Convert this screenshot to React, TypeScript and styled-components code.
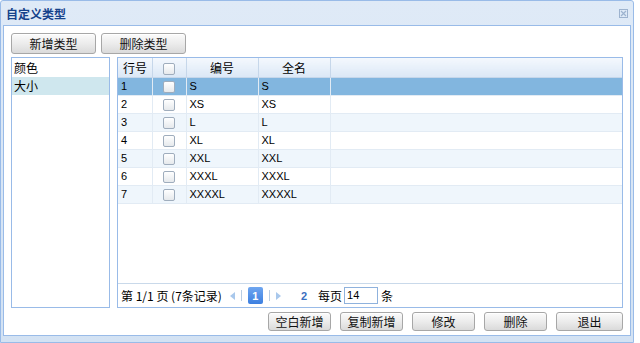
import React from "react";
import styled, { createGlobalStyle, css } from "styled-components";

const Global = createGlobalStyle`
  html, body { margin: 0; padding: 0; background: #ffffff; }
  body { font-family: "Noto Sans CJK SC", "Liberation Sans", sans-serif; font-size: 12px; color: #000; }
  * { box-sizing: border-box; }
`;

const Window = styled.div`
  width: 634px;
  height: 343px;
  display: flex;
  flex-direction: column;
  background: linear-gradient(#dfeaf7, #d3e2f3);
  border: 1px solid #99bbe8;
  border-radius: 3px 3px 0 0;
`;

const TitleBar = styled.div`
  height: 24px;
  display: flex;
  align-items: center;
  justify-content: space-between;
  padding: 0 5px 0 5px;
`;

const Title = styled.span`
  font-size: 12px;
  font-weight: bold;
  color: #15428b;
`;

const Body = styled.div`
  flex: 1;
  margin: 0 2px 6px 2px;
  background: #fff;
  border: 1px solid #99bbe8;
  padding: 7px 7px 0 7px;
  display: flex;
  flex-direction: column;
`;

const Toolbar = styled.div`
  display: flex;
  gap: 5px;
  height: 21px;
`;

const Button = styled.button<{ $w: number }>`
  width: ${(p) => p.$w}px;
  height: 100%;
  padding: 0;
  font-family: "Noto Sans CJK SC", sans-serif;
  font-size: 12px;
  color: #111;
  border: 1px solid #a7a7a7;
  border-radius: 3px;
  background: linear-gradient(#fbfbfb, #ececec 50%, #dadada);
  box-shadow: inset 0 1px 0 #fff;
`;

const Main = styled.div`
  margin-top: 3px;
  height: 251px;
  display: flex;
  gap: 7px;
`;

const ListPanel = styled.div`
  width: 99px;
  border: 1px solid #99bbe8;
  padding-top: 1px;
`;

const ListItem = styled.div<{ $sel?: boolean }>`
  height: 18px;
  line-height: 18px;
  padding-left: 2px;
  ${(p) =>
    p.$sel &&
    css`
      background: #cfe7ee;
    `}
`;

const GridPanel = styled.div`
  flex: 1;
  border: 1px solid #99bbe8;
  display: flex;
  flex-direction: column;
`;

const GridArea = styled.div`
  flex: 1;
`;

const Table = styled.table`
  border-collapse: collapse;
  width: 100%;
  table-layout: fixed;
`;

const Th = styled.th<{ $w?: number; $left?: boolean }>`
  ${(p) => p.$w && css`width: ${p.$w}px;`}
  height: 19px;
  padding: 0 0 0 ${(p) => (p.$left ? 5 : 0)}px;
  font-weight: normal;
  font-size: 12px;
  text-align: ${(p) => (p.$left ? "left" : "center")};
  background: linear-gradient(#f4f8fd, #dbe8f6);
  border-right: 1px solid #c6d7ea;
  border-bottom: 1px solid #c6d7ea;
  &:last-child { border-right: none; }
`;

const Tr = styled.tr<{ $sel?: boolean; $alt?: boolean }>`
  background: ${(p) => (p.$sel ? "#82b6df" : p.$alt ? "#eff6fc" : "#ffffff")};
`;

const Td = styled.td<{ $center?: boolean }>`
  height: 18px;
  padding: 0 0 0 ${(p) => (p.$center ? 0 : 3)}px;
  font-family: "Liberation Sans", sans-serif;
  font-size: 11px;
  text-align: ${(p) => (p.$center ? "center" : "left")};
  border-right: 1px solid #e2ebf4;
  border-bottom: 1px solid #e2ebf4;
  &:last-child { border-right: none; }
`;

const Check = styled.span`
  display: inline-block;
  width: 12px;
  height: 12px;
  vertical-align: middle;
  border: 1px solid #9fadbd;
  border-radius: 2px;
  background: linear-gradient(#ffffff, #e6e9ec);
`;

const Pager = styled.div`
  height: 24px;
  border-top: 1px solid #c9d9ea;
  display: flex;
  align-items: center;
  padding-left: 3px;
  font-size: 12px;
  white-space: nowrap;
`;

const PagerText = styled.span<{ $ml?: number }>`
  margin-left: ${(p) => p.$ml ?? 0}px;
`;

const Arrow = styled.span<{ $ml: number; $dir: "l" | "r" }>`
  margin-left: ${(p) => p.$ml}px;
  width: 0;
  height: 0;
  border-top: 4px solid transparent;
  border-bottom: 4px solid transparent;
  ${(p) =>
    p.$dir === "l"
      ? css`border-right: 5px solid #a9c8ec;`
      : css`border-left: 5px solid #a9c8ec;`}
`;

const Sep = styled.span<{ $ml: number }>`
  margin-left: ${(p) => p.$ml}px;
  width: 1px;
  height: 11px;
  background: #b9cde3;
`;

const PageBtn = styled.span`
  margin-left: 6px;
  width: 15px;
  height: 17px;
  border-radius: 2px;
  background: linear-gradient(#6fa6f0, #3c7fe0);
  color: #fff;
  font-family: "Liberation Sans", sans-serif;
  font-size: 11px;
  font-weight: bold;
  display: flex;
  align-items: center;
  justify-content: center;
`;

const PageLink = styled.span`
  margin-left: 20px;
  color: #3a6fc0;
  font-family: "Liberation Sans", sans-serif;
  font-size: 11px;
  font-weight: bold;
`;

const SizeInput = styled.div`
  margin-left: 2px;
  width: 34px;
  height: 17px;
  border: 1px solid #8fb2dd;
  font-family: "Liberation Sans", sans-serif;
  font-size: 11px;
  line-height: 15px;
  padding-left: 2px;
`;

const Footer = styled.div`
  margin-top: 4px;
  height: 19px;
  display: flex;
  justify-content: flex-end;
  gap: 9px;
`;

const CloseIcon = () => (
  <svg width="9" height="9" viewBox="0 0 9 9">
    <rect x="0.5" y="0.5" width="8" height="8" fill="none" stroke="#9db3cf" />
    <path d="M2 2 L7 7 M7 2 L2 7" stroke="#9db3cf" strokeWidth="1.2" />
  </svg>
);

const rows = ["S", "XS", "L", "XL", "XXL", "XXXL", "XXXXL"];

export default function App() {
  return (
    <>
      <Global />
      <Window>
        <TitleBar>
          <Title>自定义类型</Title>
          <CloseIcon />
        </TitleBar>
        <Body>
          <Toolbar>
            <Button $w={85}>新增类型</Button>
            <Button $w={85}>删除类型</Button>
          </Toolbar>
          <Main>
            <ListPanel>
              <ListItem>颜色</ListItem>
              <ListItem $sel>大小</ListItem>
            </ListPanel>
            <GridPanel>
              <GridArea>
                <Table>
                  <thead>
                    <tr>
                      <Th $w={34} $left>行号</Th>
                      <Th $w={34}><Check /></Th>
                      <Th $w={72}>编号</Th>
                      <Th $w={72}>全名</Th>
                      <Th />
                    </tr>
                  </thead>
                  <tbody>
                    {rows.map((r, i) => (
                      <Tr key={r} $sel={i === 0} $alt={i % 2 === 0}>
                        <Td>{i + 1}</Td>
                        <Td $center><Check /></Td>
                        <Td>{r}</Td>
                        <Td>{r}</Td>
                        <Td />
                      </Tr>
                    ))}
                  </tbody>
                </Table>
              </GridArea>
              <Pager>
                <PagerText>第 1/1 页 (7条记录)</PagerText>
                <Arrow $ml={8} $dir="l" />
                <Sep $ml={6} />
                <PageBtn>1</PageBtn>
                <Sep $ml={6} />
                <Arrow $ml={6} $dir="r" />
                <PageLink>2</PageLink>
                <PagerText $ml={11}>每页</PagerText>
                <SizeInput>14</SizeInput>
                <PagerText $ml={3}>条</PagerText>
              </Pager>
            </GridPanel>
          </Main>
          <Footer>
            <Button $w={63}>空白新增</Button>
            <Button $w={63}>复制新增</Button>
            <Button $w={63}>修改</Button>
            <Button $w={63}>删除</Button>
            <Button $w={67}>退出</Button>
          </Footer>
        </Body>
      </Window>
    </>
  );
}
